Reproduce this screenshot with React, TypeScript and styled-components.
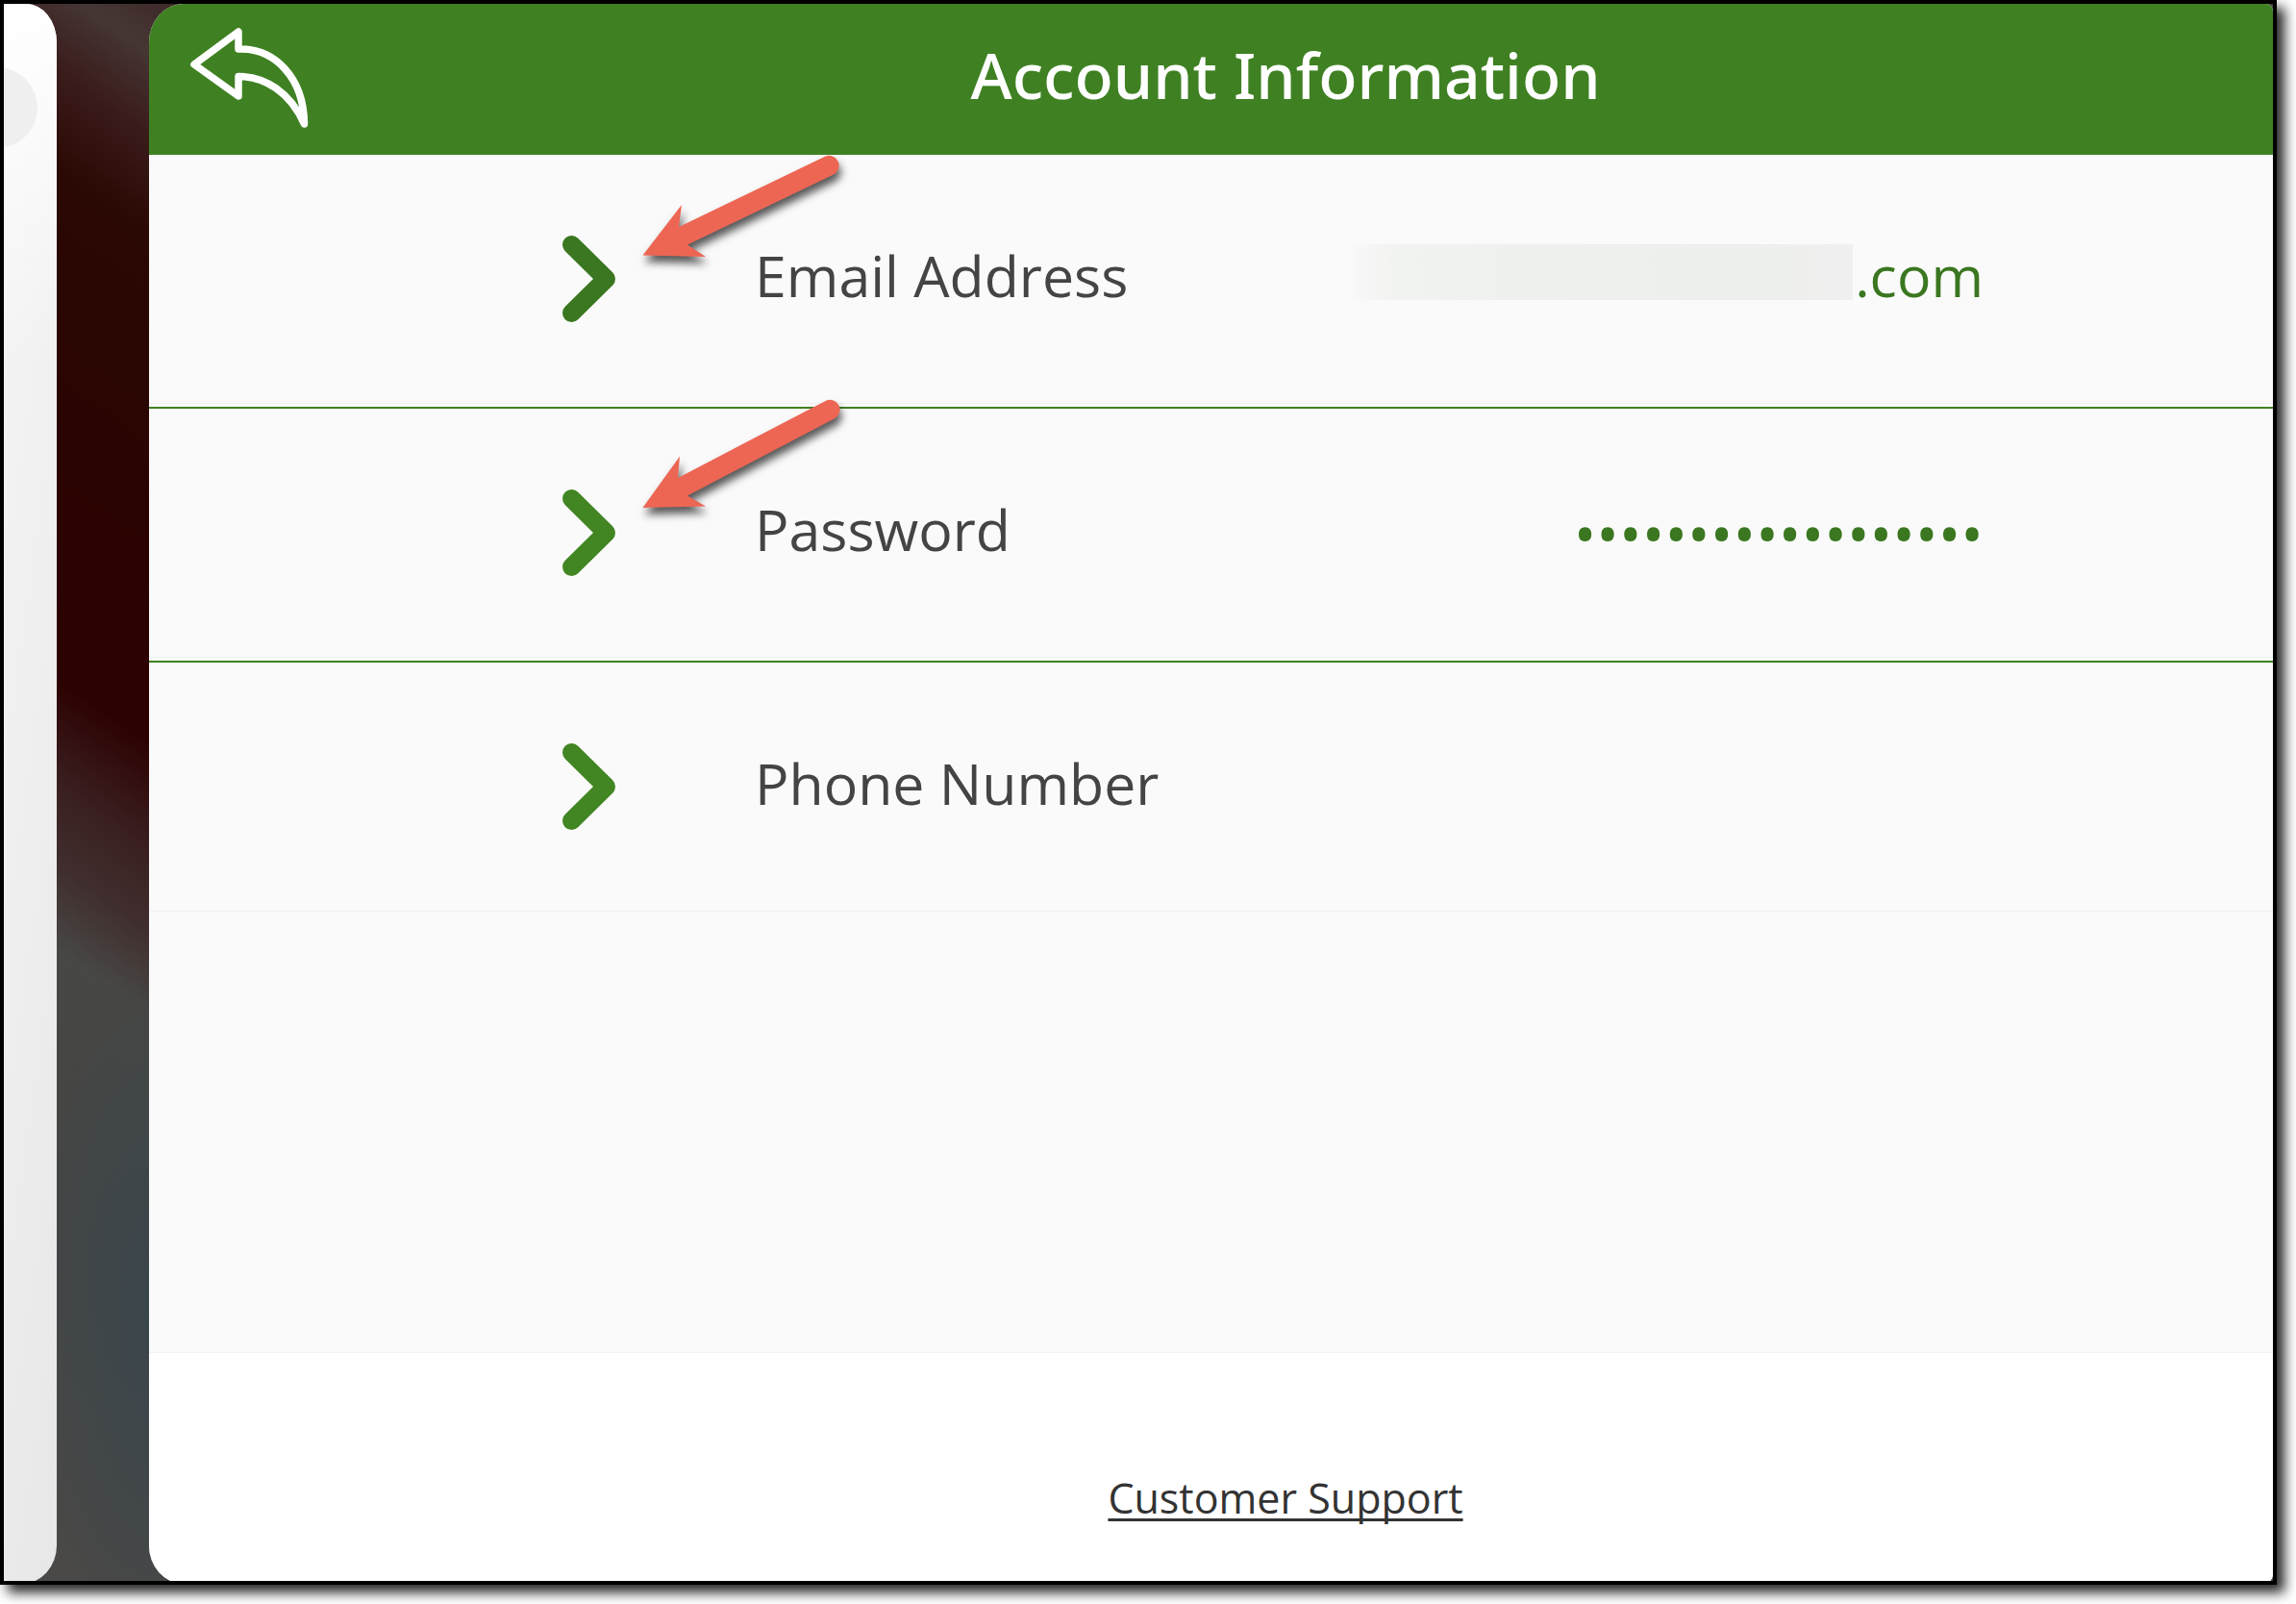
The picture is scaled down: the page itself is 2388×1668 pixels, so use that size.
import React from "react";
import styled, { createGlobalStyle } from "styled-components";

const green = "#3f8122";
const darkGreen = "#3a7720";
const sans = `"Open Sans", "Noto Sans", sans-serif`;

const GlobalStyle = createGlobalStyle`
  * { box-sizing: border-box; }
  body { margin: 0; background: #fff; font-family: ${sans}; }
`;

const Page = styled.div`
  display: flex;
  min-height: 100vh;
  padding: 0 20px 20px 0;
`;

const Frame = styled.div`
  flex: 1;
  display: grid;
  grid-template-columns: 55px minmax(0, 1fr);
  column-gap: 96px;
  overflow: hidden;
  border: 4px solid #000;
  box-shadow: 8px 8px 12px rgba(0, 0, 0, 0.85);
  background:
    radial-gradient(ellipse 130px 360px at 160px 1360px, #3a464d, rgba(60, 70, 76, 0) 100%) no-repeat,
    linear-gradient(215deg, #3d2826 0, #453634 60px, #3a1c1b 130px, #2a0803 220px, #2a0402 440px,
      #2d0202 650px, #3a1f20 740px, #402e2e 810px, #474744 880px, #444543 1120px, #4a4947 1430px)
      27px 0 / 160px 100% no-repeat,
    #474744;
`;

const SidePanel = styled.aside`
  margin-bottom: -3px;
  overflow: hidden;
  border-radius: 0 32px 36px 0 / 0 40px 40px 0;
  background: linear-gradient(98deg, #f6f6f6, #e7e7e7);
`;

const SideGlow = styled.div`
  height: 360px;
  padding-top: 66px;
  background: linear-gradient(165deg, #fff, rgba(255, 255, 255, 0));
`;

const Knob = styled.div`
  width: 84px;
  height: 84px;
  margin-left: -49px;
  border-radius: 50%;
  background: #efefef;
`;

const Panel = styled.main`
  display: flex;
  flex-direction: column;
  margin-bottom: -3px;
  overflow: hidden;
  border-radius: 36px 8px 10px 36px / 40px 8px 10px 40px;
  background: #fafafa;
`;

const Header = styled.header`
  display: grid;
  grid-template-columns: 155px 1fr;
  align-items: center;
  height: 157px;
  background: ${green};
`;

const BackButton = styled.button`
  width: 126px;
  height: 108px;
  margin: 0 0 0 42px;
  padding: 0;
  border: 0;
  background: none;
  svg { display: block; }
`;

const Title = styled.h1`
  margin: 0;
  padding-bottom: 12px;
  color: #fff;
  font: 500 66px/144px "Noto Sans", sans-serif;
  text-align: center;
`;

const List = styled.ul`
  margin: 0;
  padding: 0;
  list-style: none;
`;

const Item = styled.li`
  position: relative;
  &:not(:last-child) {
    padding-bottom: 3px;
    border-bottom: 2px solid ${green};
  }
`;

const Row = styled.button`
  display: flex;
  align-items: center;
  width: 100%;
  height: 259px;
  padding: 0 301px 0 430px;
  border: 0;
  border-bottom: 1px solid #f2f1f2;
  background: none;
  color: #444;
  font: 400 59px/80px ${sans};
  text-align: left;
`;

const Label = styled.span`
  flex: 1;
  margin-left: 145px;
  padding-bottom: 8px;
`;

const Value = styled.span`
  display: flex;
  align-items: center;
  gap: 2px;
  padding-bottom: 8px;
  color: ${darkGreen};
`;

const Redaction = styled.span`
  width: 520px;
  height: 58px;
  margin-bottom: 6px;
  background: linear-gradient(90deg, #f8f8f8, #f1f3f0 9%, #eff1ee 30%, #edefec 80%, #eff0ef);
`;

const Dots = styled.span`
  color: ${darkGreen};
  font: 400 63px/80px ${sans};
`;

const Pointer = styled.svg`
  position: absolute;
  top: -10px;
  left: 505px;
  overflow: visible;
  pointer-events: none;
  filter: drop-shadow(2px 7px 4px rgba(0, 0, 0, 0.65));
`;

const Footer = styled.footer`
  display: flex;
  justify-content: center;
  height: 241px;
  margin-top: auto;
  padding: 121px 0 0 155px;
  border-top: 1px solid #f4f4f4;
  background: #fff;
`;

const SupportLink = styled.a`
  color: #333;
  font: 400 43px/60px ${sans};
  text-decoration: underline;
  text-decoration-thickness: 3px;
  text-decoration-skip-ink: none;
  text-underline-offset: 5px;
`;

const Chevron = ({ color }: { color: string }) => (
  <svg width="55" height="90" viewBox="0 0 55 90" fill="none" stroke={color} strokeWidth="19" strokeLinecap="round" strokeLinejoin="round" aria-hidden="true">
    <path d="M9.5 9.5L45.5 45L9.5 80.5" />
  </svg>
);

const Arrow = ({ d }: { d: string }) => (
  <Pointer width="214" height="120" viewBox="660 151 214 120" fill="#ed6654" aria-hidden="true">
    <path d={d} />
  </Pointer>
);

const arrows = {
  email: "M668.5 265.5L709 213L706 236L857.5 163A10.3 10.3 0 0 1 867 181.5L715 254.5L734 267Z",
  password: "M668.5 264L707 210.5L705 233L858.5 153A10.3 10.3 0 0 1 868.5 171L715 251.5L734 262.5Z",
};

export default function App() {
  return (
    <>
      <GlobalStyle />
      <Page>
        <Frame>
          <SidePanel>
            <SideGlow><Knob /></SideGlow>
          </SidePanel>
          <Panel>
            <Header>
              <BackButton type="button" aria-label="Back">
                <svg width="126" height="108" viewBox="197 28 126 108" fill="none" stroke="#fff" strokeWidth="7.5" strokeLinejoin="round">
                  <path d="M202 66L248 32V50C286 49 316 80 316.5 128C302 95 275 78 248 78.5V99Z" />
                  <path d="M311 102L316 102L316 124Z" fill="#fff" strokeWidth="2" />
                </svg>
              </BackButton>
              <Title>Account Information</Title>
            </Header>
            <List>
              <Item>
                <Row type="button">
                  <Chevron color={darkGreen} />
                  <Label>Email Address</Label>
                  <Value><Redaction />.com</Value>
                </Row>
                <Arrow d={arrows.email} />
              </Item>
              <Item>
                <Row type="button">
                  <Chevron color="#428523" />
                  <Label>Password</Label>
                  <Dots>{"•".repeat(18)}</Dots>
                </Row>
                <Arrow d={arrows.password} />
              </Item>
              <Item>
                <Row type="button">
                  <Chevron color="#428523" />
                  <Label>Phone Number</Label>
                </Row>
              </Item>
            </List>
            <Footer>
              <SupportLink href="#support">Customer Support</SupportLink>
            </Footer>
          </Panel>
        </Frame>
      </Page>
    </>
  );
}
